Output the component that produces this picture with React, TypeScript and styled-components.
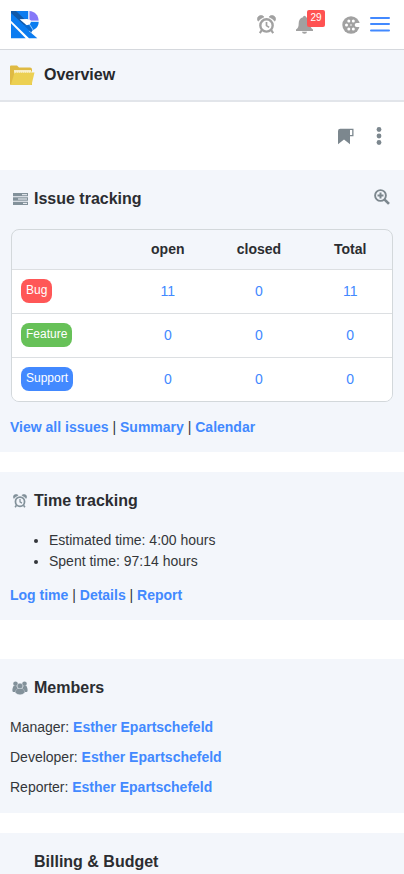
import React from 'react';
import styled, { createGlobalStyle } from 'styled-components';

const GlobalStyle = createGlobalStyle`
  *, *::before, *::after { box-sizing: border-box; }
  body {
    margin: 0;
    background: #fff;
    color: #33363a;
    font: 14px/20px "Liberation Sans", Arial, sans-serif;
  }
  h1, h2, p, ul { margin: 0; }
`;

const Page = styled.div`
  display: flex;
  flex-direction: column;
  min-height: 100vh;
`;

const TopBar = styled.header`
  display: flex;
  align-items: center;
  justify-content: space-between;
  height: 50px;
  padding: 0 14px 0 10px;
  border-bottom: 1px solid #d5d8dd;
`;

const HomeLink = styled.a`
  display: flex;
`;

const TopActions = styled.nav`
  display: flex;
  align-items: center;
`;

const IconButton = styled.button<{ $gap?: number; $color?: string }>`
  position: relative;
  display: flex;
  margin: 0 0 0 ${({ $gap = 0 }) => $gap}px;
  padding: 0;
  border: 0;
  background: none;
  color: ${({ $color = '#7c878e' }) => $color};
  cursor: pointer;
`;

const MenuButton = styled(IconButton)`
  padding-bottom: 2px;
`;

const Counter = styled.span`
  position: absolute;
  top: -5px;
  left: 11px;
  width: 18px;
  height: 17px;
  border-radius: 2px;
  background: #ff5252;
  color: #fff;
  font-size: 10px;
  line-height: 16px;
  text-align: center;
`;

const TitleBar = styled.div`
  display: flex;
  align-items: center;
  gap: 9px;
  height: 52px;
  padding: 0 10px;
  border-bottom: 2px solid #e2e5ea;
  background: #f3f6fb;
`;

const PageTitle = styled.h1`
  color: #26282c;
  font-size: 16px;
  line-height: 20px;
`;

const Tools = styled.div`
  display: flex;
  align-items: center;
  justify-content: flex-end;
  height: 68px;
  padding: 0 22px 0 0;
`;

const Panel = styled.section<{ $gap?: number; $bottom?: number; $fill?: boolean }>`
  flex: ${({ $fill }) => ($fill ? '1 0 auto' : '0 0 auto')};
  margin-top: ${({ $gap = 0 }) => $gap}px;
  padding: 19px 10px ${({ $bottom = 0 }) => $bottom}px;
  background: #f3f6fb;
`;

const PanelHead = styled.div`
  display: flex;
  align-items: center;
  justify-content: space-between;
  height: 20px;
`;

const PanelTitle = styled.h2`
  display: grid;
  grid-template-columns: 16px auto;
  align-items: center;
  justify-content: start;
  gap: 6px;
  padding-left: 2px;
  color: #2b2d31;
  font-size: 16px;
  line-height: 20px;
`;

const IconSlot = styled.span`
  display: flex;
  justify-content: center;
  color: #82919a;
`;

const ZoomSlot = styled.div`
  padding: 0 4px 4px 0;
`;

const TableFrame = styled.div`
  margin: 20px 1px 15px;
  overflow: hidden;
  border: 1px solid #d3d8db;
  border-radius: 8px;
`;

const IssueTable = styled.table`
  width: 100%;
  table-layout: fixed;
  border-collapse: collapse;

  th, td { padding: 0; text-align: center; }
  th { height: 39px; color: #2b2d31; }
  td { height: 44px; border-top: 1px solid #dcdfe2; background: #fff; }
  td:first-child { padding-left: 9px; text-align: left; }
`;

const Column = styled.col<{ $share: number }>`
  width: ${({ $share }) => $share}%;
`;

const Tracker = styled.a<{ $color: string }>`
  display: inline-block;
  height: 24px;
  padding: 0 5px;
  border-radius: 8px;
  background: ${({ $color }) => $color};
  color: #fff;
  font-size: 12px;
  line-height: 22px;
  text-decoration: none;
  vertical-align: middle;
`;

const CountLink = styled.a`
  color: #4289ff;
  text-decoration: none;
`;

const StrongLink = styled(CountLink)`
  font-weight: bold;
`;

const TimeList = styled.ul`
  margin: 19px 0 13px;
  padding-left: 39px;
  line-height: 21px;
`;

const MemberList = styled.div`
  display: grid;
  gap: 10px;
  margin-top: 19px;
`;

const Logo = () => (
  <svg width="29" height="29" viewBox="0 0 87 87" aria-label="Home" role="img">
    <path fill="#0b7cf0" d="M3 3H55V31L64 35H86C86 48 79 56 66 62L56 62 82 85H57L3 32Z" />
    <path fill="#0b7cf0" d="M3 40 47 85H3Z" />
    <path fill="#1259a8" d="M3 3H18L44 28H30L50 45H42L3 9Z" />
    <path fill="#8578f8" d="M58 3C75 4 85 16 86 32H63L58 28Z" />
    <path stroke="#e4effc" strokeWidth="2" d="M56.500 2V30M62 33.500H87M58 42 70 61" />
    <path fill="#fff" d="M29 28 52 27 63 33C63 40 59 45 50 46Z" />
    <path fill="#0b68cc" d="M42 46H56L67 61 64 68Z" />
  </svg>
);

const Alarm = ({ size }: { size: number }) => (
  <svg width={size} height={size} viewBox="0 0 20 20" fill="none" stroke="currentColor" aria-hidden>
    <circle cx="10" cy="11" r="6.500" strokeWidth="2.500" />
    <path strokeWidth="1.800" d="M10 7.300V11.200L12.800 13" />
    <path fill="currentColor" strokeWidth=".6" d="M1.200 6.500A3.800 3.800 0 0 1 7.400 2Q3.800 3.200 1.200 6.500ZM18.800 6.500A3.800 3.800 0 0 0 12.600 2Q16.200 3.200 18.800 6.500Z" />
    <path strokeWidth="2.200" d="m5 16-2 3M15 16l2 3" />
  </svg>
);

const Bell = () => (
  <svg width="17" height="19" viewBox="0 0 17 19" fill="currentColor" aria-hidden>
    <path d="M7 2.200a1.500 1.500 0 0 1 3 0c3 .7 4.300 3 4.300 6 0 3.600.7 5 2.700 6.200V16H0v-1.600c2-1.200 2.700-2.600 2.700-6.200 0-3 1.300-5.300 4.300-6ZM6 16.700h5a2.500 2 0 0 1-5 0Z" />
  </svg>
);

const Reel = () => (
  <svg width="18" height="18" viewBox="0 0 18 18" aria-hidden>
    <circle cx="9" cy="9" r="8.700" fill="currentColor" />
    <g fill="#fff">
      <circle cx="6.800" cy="4.900" r="1.500" />
      <circle cx="11.300" cy="4.900" r="1.500" />
      <circle cx="4.500" cy="9" r="1.500" />
      <circle cx="9" cy="9" r=".8" />
      <circle cx="6.800" cy="13.100" r="1.500" />
      <circle cx="11.300" cy="13.100" r="1.500" />
      <path d="M18 7h-3.300a2 2 0 0 0 0 4H18Z" />
    </g>
  </svg>
);

const Menu = () => (
  <svg width="20" height="16" viewBox="0 0 20 16" stroke="currentColor" strokeWidth="2" strokeLinecap="round" aria-hidden>
    <path d="M1 2h18M1 8h18M1 14.500h18" />
  </svg>
);

const Folder = () => (
  <svg width="25" height="21" viewBox="0 0 25 21" aria-hidden>
    <path fill="#dfba43" d="M0 1.500Q0 .5 1 .5h6l2 2h11q2 0 2 2V20H1q-1 0-1-1Z" />
    <path fill="#f7edc5" d="M4 5h17v4H4Z" />
    <path fill="#ecd052" d="M4.600 7.500H24.500L21.500 20H.8Z" />
    <path stroke="#fbf5dc" strokeDasharray="1 1" d="M5 7h17" />
  </svg>
);

const Bookmark = () => (
  <svg width="17" height="17" viewBox="0 0 17 17" aria-hidden>
    <path fill="currentColor" d="M1 3q0-2.300 2.300-2.300H16.500V8.300H13V16.300L7 11.600 1 16.300Z" />
    <path fill="#fff" d="M13 2h2.200v5H13Z" />
  </svg>
);

const Dots = () => (
  <svg width="6" height="18" viewBox="0 0 6 18" fill="currentColor" aria-hidden>
    <circle cx="3" cy="2.500" r="2.400" />
    <circle cx="3" cy="9" r="2.400" />
    <circle cx="3" cy="15.500" r="2.400" />
  </svg>
);

const ZoomIn = () => (
  <svg width="16" height="16" viewBox="0 0 16 16" fill="none" stroke="currentColor" aria-hidden>
    <circle cx="6.500" cy="6.500" r="5.400" strokeWidth="1.900" />
    <path strokeWidth="2" d="M3.500 6.500h6M6.500 3.500v6" />
    <path strokeWidth="2.700" d="m10.600 10.600 4.400 4.300" />
  </svg>
);

const Tasks = () => (
  <svg width="16" height="12" viewBox="0 0 16 12" aria-hidden>
    <path fill="currentColor" d="M1 0h15v3.300H1ZM1 4.300h15v3.400H1ZM1 8.700h15V12H1Z" />
    <path stroke="#f3f6fb" d="M10 1.700h5M6 6h9M11 10.400h4" />
  </svg>
);

const People = () => (
  <svg width="16" height="14" viewBox="0 0 16 14" fill="currentColor" aria-hidden>
    <circle cx="3.500" cy="2.800" r="2.300" />
    <circle cx="12.500" cy="2.800" r="2.300" />
    <path d="M1.500 5h3l1.500 3-2.500 3H1Q-.5 9 1.500 5ZM14.500 5h-3L10 8l2.500 3H15q1.500-2-.5-6Z" />
    <circle cx="8" cy="5" r="2.800" stroke="#f3f6fb" strokeWidth=".3" />
    <path d="M5.500 7.500h5q2.300 2 2.300 4.300Q10.500 13.800 8 13.800t-4.800-2Q3.200 9.500 5.500 7.500Z" stroke="#f3f6fb" strokeWidth=".3" />
  </svg>
);

const issues = [
  { name: 'Bug', color: '#ff5757', counts: [11, 0, 11] },
  { name: 'Feature', color: '#67c158', counts: [0, 0, 0] },
  { name: 'Support', color: '#4289ff', counts: [0, 0, 0] },
];

const Links = ({ items }: { items: string[] }) => (
  <p>
    {items.map((item, i) => (
      <React.Fragment key={item}>
        {i > 0 && ' | '}
        <StrongLink href="#">{item}</StrongLink>
      </React.Fragment>
    ))}
  </p>
);

const Title = ({ icon, children }: { icon?: React.ReactNode; children: React.ReactNode }) => (
  <PanelTitle>
    <IconSlot>{icon}</IconSlot>
    {children}
  </PanelTitle>
);

export default function App() {
  return (
    <Page>
      <GlobalStyle />
      <TopBar>
        <HomeLink href="#"><Logo /></HomeLink>
        <TopActions>
          <IconButton $color="#a1a1a1" aria-label="Timer"><Alarm size={19} /></IconButton>
          <IconButton $gap={20} $color="#a1a1a1" aria-label="Notifications">
            <Bell />
            <Counter>29</Counter>
          </IconButton>
          <IconButton $gap={29} $color="#a1a1a1" aria-label="Media"><Reel /></IconButton>
          <MenuButton $gap={10} $color="#4289ff" aria-label="Menu"><Menu /></MenuButton>
        </TopActions>
      </TopBar>
      <TitleBar>
        <Folder />
        <PageTitle>Overview</PageTitle>
      </TitleBar>
      <main>
        <Tools>
          <IconButton aria-label="Bookmark"><Bookmark /></IconButton>
          <IconButton $gap={22} aria-label="More"><Dots /></IconButton>
        </Tools>
        <Panel $bottom={15}>
          <PanelHead>
            <Title icon={<Tasks />}>Issue tracking</Title>
            <ZoomSlot><IconButton aria-label="Show details"><ZoomIn /></IconButton></ZoomSlot>
          </PanelHead>
          <TableFrame>
            <IssueTable>
              <colgroup>
                <Column $share={30} />
                <Column $share={22} />
                <Column $share={26} />
                <Column $share={22} />
              </colgroup>
              <thead>
                <tr>
                  <th aria-label="Tracker" />
                  <th scope="col">open</th>
                  <th scope="col">closed</th>
                  <th scope="col">Total</th>
                </tr>
              </thead>
              <tbody>
                {issues.map(({ name, color, counts }) => (
                  <tr key={name}>
                    <td><Tracker href="#" $color={color}>{name}</Tracker></td>
                    {counts.map((count, i) => (
                      <td key={i}><CountLink href="#">{count}</CountLink></td>
                    ))}
                  </tr>
                ))}
              </tbody>
            </IssueTable>
          </TableFrame>
          <Links items={['View all issues', 'Summary', 'Calendar']} />
        </Panel>
        <Panel $gap={20} $bottom={15}>
          <Title icon={<Alarm size={14} />}>Time tracking</Title>
          <TimeList>
            <li>Estimated time: 4:00 hours</li>
            <li>Spent time: 97:14 hours</li>
          </TimeList>
          <Links items={['Log time', 'Details', 'Report']} />
        </Panel>
        <Panel $gap={39} $bottom={16}>
          <Title icon={<People />}>Members</Title>
          <MemberList>
            {['Manager', 'Developer', 'Reporter'].map((role) => (
              <p key={role}>
                {role}: <StrongLink href="#">Esther Epartschefeld</StrongLink>
              </p>
            ))}
          </MemberList>
        </Panel>
      </main>
      <Panel $gap={20} $fill>
        <Title>Billing &amp; Budget</Title>
      </Panel>
    </Page>
  );
}
